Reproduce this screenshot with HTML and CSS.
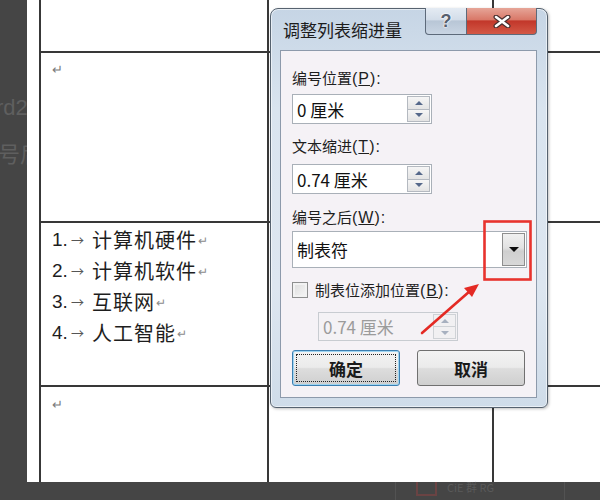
FILE: index.html
```html
<!DOCTYPE html>
<html lang="zh-CN">
<head>
  <meta charset="UTF-8">
  <title>调整列表缩进量</title>
  <link rel="stylesheet" href="styles.css">
</head>
<body>
  <div class="desk">
    <div class="gutter">
      <span class="ghost g1">rd2</span>
      <span class="ghost g2">号后缩</span>
    </div>
    <div class="page">
      <div class="grid">
        <div class="cell"></div>
        <div class="cell"></div>
        <div class="cell last"></div>

        <div class="cell"><span class="pmark">↵</span></div>
        <div class="cell"></div>
        <div class="cell last"></div>

        <div class="cell list">
          <div class="item"><span class="num">1.</span><span class="tab">→</span>计算机硬件<span class="pmark small">↵</span></div>
          <div class="item"><span class="num">2.</span><span class="tab">→</span>计算机软件<span class="pmark small">↵</span></div>
          <div class="item"><span class="num">3.</span><span class="tab">→</span>互联网<span class="pmark small">↵</span></div>
          <div class="item"><span class="num">4.</span><span class="tab">→</span>人工智能<span class="pmark small">↵</span></div>
        </div>
        <div class="cell"></div>
        <div class="cell last"></div>

        <div class="cell foot"><span class="pmark">↵</span></div>
        <div class="cell foot"></div>
        <div class="cell foot last"></div>
      </div>
    </div>
  </div>

  <div class="taskbar">
    <span class="tb-sep s1"></span>
    <span class="tb-icon"></span>
    <span class="tb-text">CiE 群 RG</span>
    <span class="tb-sep s2"></span>
  </div>

  <!-- list indent dialog -->
  <div class="dialog">
    <div class="titlebar">
      <span class="title">调整列表缩进量</span>
      <div class="caption-btns">
        <span class="cap-help">?</span>
        <span class="cap-close">
          <svg width="18" height="13" viewBox="0 0 18 13">
            <path d="M3 2 L15 11 M15 2 L3 11" stroke="#4a3030" stroke-width="5" stroke-linecap="round"/>
            <path d="M3 2 L15 11 M15 2 L3 11" stroke="#fff" stroke-width="2.6" stroke-linecap="round"/>
          </svg>
        </span>
      </div>
    </div>

    <div class="client">
      <div class="label l1">编号位置<span class="key">(<u>P</u>):</span></div>
      <div class="field f1">
        <span class="value">0 厘米</span>
        <span class="spin">
          <span class="spin-btn"><i class="up"></i></span>
          <span class="spin-btn"><i class="down"></i></span>
        </span>
      </div>

      <div class="label l2">文本缩进<span class="key">(<u>T</u>):</span></div>
      <div class="field f2">
        <span class="value">0.74 厘米</span>
        <span class="spin">
          <span class="spin-btn"><i class="up"></i></span>
          <span class="spin-btn"><i class="down"></i></span>
        </span>
      </div>

      <div class="label l3">编号之后<span class="key">(<u>W</u>):</span></div>
      <div class="combo">
        <span class="value">制表符</span>
        <span class="drop"><i class="down big"></i></span>
      </div>

      <div class="check-row">
        <span class="checkbox"></span>
        <span class="label">制表位添加位置<span class="key">(<u>B</u>):</span></span>
      </div>

      <div class="field disabled">
        <span class="value">0.74 厘米</span>
        <span class="spin">
          <span class="spin-btn"><i class="up"></i></span>
          <span class="spin-btn"><i class="down"></i></span>
        </span>
      </div>

      <div class="actions">
        <button class="btn default"><span class="focus">确定</span></button>
        <button class="btn">取消</button>
      </div>
    </div>
  </div>

  <!-- red callout over the dropdown -->
  <svg class="callout" width="600" height="500" viewBox="0 0 600 500">
    <rect x="484.5" y="221.5" width="46" height="58" fill="none" stroke="#e8332e" stroke-width="2.6"/>
    <path d="M422 333 L470 291" stroke="#e42a24" stroke-width="2.6" stroke-linecap="round"/>
    <path d="M479 284 L464 288 L472 297 Z" fill="#e42a24"/>
  </svg>
</body>
</html>
```

FILE: styles.css
```css
* {
  box-sizing: border-box;
}
body {
  margin: 0;
  width: 600px;
  height: 500px;
  overflow: hidden;
  position: relative;
  background: #454545;
  font-family: "Noto Sans CJK SC", "Liberation Sans", sans-serif;
}

/* document area */
.desk {
  display: flex;
  height: 482px;
}
.gutter {
  width: 27px;
  overflow: hidden;
  display: flex;
  flex-direction: column;
  gap: 16px;
  padding-top: 94px;
  white-space: nowrap;
  color: #5f5f5f;
  font-size: 22px;
  line-height: 28px;
}
.g1 {
  margin-left: -4px;
  font-family: "Liberation Sans", sans-serif;
}
.g2 {
  margin-left: -2px;
}
.page {
  flex: 1;
  background: #fff;
  padding-left: 12px;
}
.grid {
  display: grid;
  grid-template-columns: 228px 225px 1fr;
  grid-template-rows: 53px 170px 164px 1fr;
  height: 100%;
  border-left: 2px solid #383838;
}
.cell {
  border-right: 2px solid #383838;
  border-bottom: 2px solid #383838;
}
.cell.last {
  border-right: none;
}
.cell.foot {
  border-bottom: none;
}
.pmark {
  display: inline-block;
  margin: 9px 0 0 11px;
  font-size: 13px;
  line-height: 14px;
  color: #7a7a7a;
}
.foot .pmark {
  margin-top: 10px;
}
.pmark.small {
  margin: 0 0 0 1px;
  font-size: 12px;
  color: #8c8c8c;
}
.list {
  padding: 0 0 0 11px;
}
.item {
  display: flex;
  align-items: center;
  height: 31px;
  font-size: 20px;
  letter-spacing: 1px;
  color: #1e1e1e;
}
.item:first-child {
  margin-top: 1px;
}
.num {
  width: 17px;
  font-family: "Liberation Sans", sans-serif;
  font-size: 19px;
  letter-spacing: 0;
}
.tab {
  width: 23px;
  padding-left: 2px;
  font-size: 13px;
  color: #555;
  letter-spacing: 0;
}

/* bottom strip */
.taskbar {
  height: 18px;
  display: flex;
  align-items: flex-start;
  position: relative;
}
.tb-sep {
  width: 1px;
  height: 18px;
  background: #525252;
}
.tb-sep.s1 {
  margin-left: 395px;
}
.tb-sep.s2 {
  margin-left: auto;
  margin-right: 35px;
}
.tb-icon {
  width: 21px;
  height: 14px;
  margin-left: 20px;
  border: 2px solid #6a4343;
  border-top: none;
}
.tb-text {
  margin-left: 10px;
  font-size: 11px;
  line-height: 10px;
  color: #5a5a5a;
}

/* dialog window */
.dialog {
  position: absolute;
  left: 270px;
  top: 8px;
  width: 278px;
  height: 400px;
  border: 1px solid #56626f;
  border-radius: 8px 8px 6px 6px;
  background: linear-gradient(#c6d5e5, #d9e4ef 25%, #dde6f0 70%, #cfdce9);
  box-shadow: inset 0 0 0 1px rgba(255, 255, 255, 0.55), 1px 1px 3px rgba(0, 0, 0, 0.25);
  padding: 0 10px 9px 9px;
  display: flex;
  flex-direction: column;
}
.titlebar {
  height: 41px;
  display: flex;
  align-items: flex-start;
}
.title {
  margin: 9px 0 0 3px;
  font-size: 17px;
  line-height: 24px;
  color: #1c1c1c;
}
.caption-btns {
  margin-left: auto;
  margin-top: -1px;
  display: flex;
  height: 27px;
}
.cap-help,
.cap-close {
  display: flex;
  align-items: center;
  justify-content: center;
  border: 1px solid #5d6a7a;
  border-top: none;
}
.cap-help {
  width: 42px;
  border-radius: 0 0 0 4px;
  background: linear-gradient(#e4ebf3, #d3dde9 45%, #b8c6d6 50%, #c9d5e3);
  font-family: "Liberation Sans", sans-serif;
  font-weight: bold;
  font-size: 18px;
  color: #56606e;
  text-shadow: 0 0 1px #fff, 0 0 2px #fff, 0 0 2px #fff;
}
.cap-close {
  width: 70px;
  border-left: none;
  border-radius: 0 0 4px 0;
  background: linear-gradient(#e6a598, #d97868 45%, #c2372a 50%, #d35846);
}

.client {
  flex: 1;
  border: 1px solid #8d9aab;
  background: #f5f2f6;
  padding: 17px 0 0 11px;
  display: flex;
  flex-direction: column;
  align-items: flex-start;
}
.label {
  font-size: 15px;
  line-height: 20px;
  color: #1e1e1e;
}
.key {
  font-family: "Liberation Sans", sans-serif;
  font-size: 16px;
  letter-spacing: 1px;
}
.l2 {
  margin-top: 12px;
}
.l3 {
  margin-top: 13px;
}

.field {
  margin-top: 5px;
  width: 140px;
  height: 30px;
  border: 1px solid #a9b0b8;
  background: #fff;
  display: flex;
  align-items: center;
  padding: 0 1px 0 4px;
}
.f2 {
  margin-top: 7px;
}
.value {
  flex: 1;
  font-size: 17px;
  color: #111;
}
.spin {
  width: 23px;
  height: 26px;
  display: flex;
  flex-direction: column;
}
.spin-btn {
  flex: 1;
  display: flex;
  align-items: center;
  justify-content: center;
  border: 1px solid #b4b9c0;
  background: linear-gradient(#f6f6f6, #e4e4e4);
}
.spin-btn + .spin-btn {
  border-top: none;
}
i.up,
i.down {
  width: 0;
  height: 0;
  border-left: 4px solid transparent;
  border-right: 4px solid transparent;
}
i.up {
  border-bottom: 4px solid #55688a;
}
i.down {
  border-top: 4px solid #55688a;
}
i.down.big {
  border-left-width: 5px;
  border-right-width: 5px;
  border-top: 5px solid #0c0c0c;
}

.combo {
  margin-top: 3px;
  width: 235px;
  height: 37px;
  border: 1px solid #a9b0b8;
  background: #fff;
  display: flex;
  align-items: center;
  padding: 0 1px 0 4px;
}
.drop {
  width: 23px;
  height: 33px;
  display: flex;
  align-items: center;
  justify-content: center;
  border: 1px solid #8e8e8e;
  background: linear-gradient(#f0f0f0, #e2e2e2 45%, #cfcfcf 55%, #d8d8d8);
}

.check-row {
  margin-top: 13px;
  height: 18px;
  display: flex;
  align-items: center;
  gap: 7px;
}
.checkbox {
  width: 16px;
  height: 16px;
  border: 1px solid #8e8f8f;
  background: linear-gradient(135deg, #dcdcdc, #f7f7f7);
  box-shadow: inset 0 0 0 2px #f2f2f2;
}

.field.disabled {
  margin: 13px 0 0 26px;
  height: 29px;
  border-color: #c8ccd1;
  background: #f4f2f5;
}
.disabled .value {
  color: #9b9b9b;
}
.disabled .spin {
  height: 25px;
}
.disabled .spin-btn {
  border-color: #cfd2d6;
  background: #f1f0f2;
}
.disabled i.up {
  border-bottom-color: #a7b0bf;
}
.disabled i.down {
  border-top-color: #a7b0bf;
}

.actions {
  margin-top: 9px;
  display: flex;
  gap: 17px;
}
.btn {
  width: 108px;
  height: 36px;
  padding: 0;
  border: 1px solid #707070;
  border-radius: 3px;
  background: linear-gradient(#f3f3f3, #ebebeb 48%, #dddddd 52%, #cfcfcf);
  font-family: "Noto Sans CJK SC", sans-serif;
  font-size: 17px;
  font-weight: bold;
  color: #1a1a1a;
  display: flex;
  align-items: center;
  justify-content: center;
}
.btn.default {
  border-color: #3c7fb1;
  box-shadow: inset 0 0 0 1px #9fd5f2;
  padding: 3px;
}
.focus {
  flex: 1;
  height: 100%;
  display: flex;
  align-items: center;
  justify-content: center;
  border: 1px dotted #222;
}

/* annotation layer */
.callout {
  position: absolute;
  left: 0;
  top: 0;
  pointer-events: none;
}
```
